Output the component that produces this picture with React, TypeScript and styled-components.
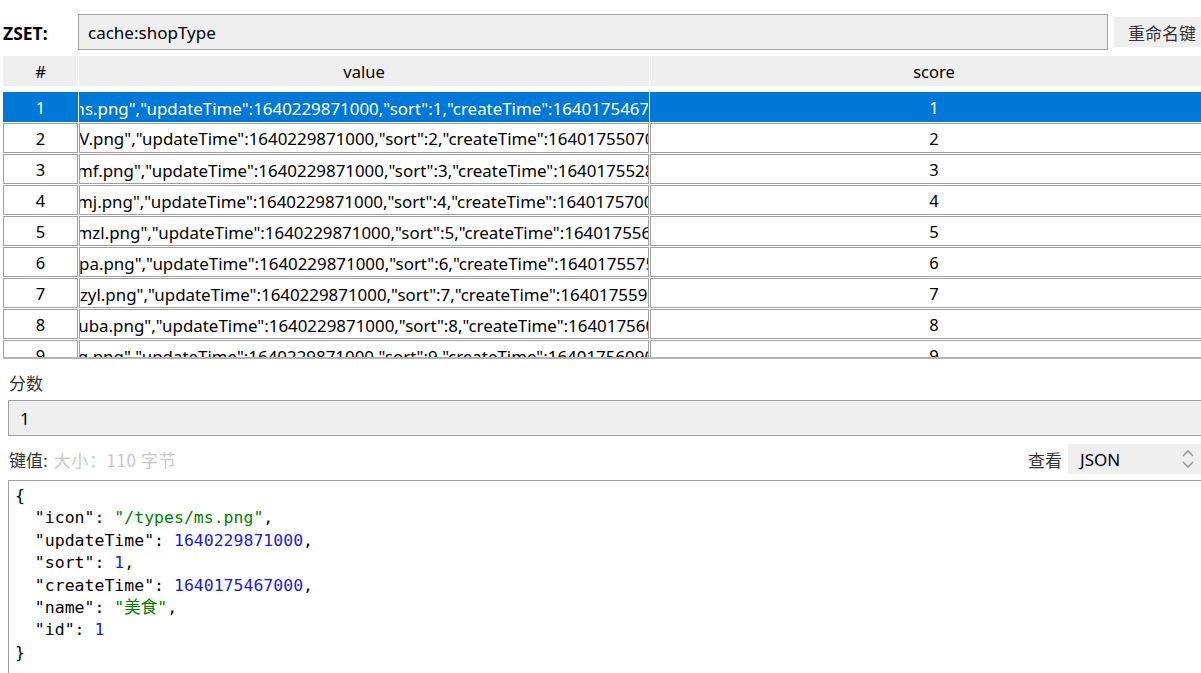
import React from "react";
import styled, { createGlobalStyle } from "styled-components";

const GlobalStyle = createGlobalStyle`
  html, body {
    margin: 0;
    padding: 0;
    background: #ffffff;
    overflow: hidden;
  }
  body {
    font-family: "Noto Sans", "Noto Sans CJK SC", sans-serif;
    color: #000;
  }
`;

const cjk = `"Noto Sans CJK SC", "Noto Sans", sans-serif`;

const Page = styled.div`
  width: 1230px;
  display: flex;
  flex-direction: column;
  padding-top: 14px;
`;

const KeyBar = styled.div`
  display: flex;
  align-items: center;
  padding-left: 3px;
`;

const TypeLabel = styled.div`
  width: 75px;
  font-weight: 700;
  font-size: 17.5px;
  padding-top: 2px;
  font-family: "Noto Sans", sans-serif;
`;

const KeyInput = styled.div`
  box-sizing: border-box;
  width: 1030px;
  height: 36px;
  border: 1px solid #a0a0a0;
  background: #efefef;
  display: flex;
  align-items: center;
  padding-left: 9px;
  font-size: 17px;
`;

const RenameButton = styled.button`
  margin-left: 6px;
  height: 30px;
  border: none;
  background: #efefef;
  padding: 0 14px;
  font-family: ${cjk};
  font-size: 17px;
  color: #333;
  white-space: nowrap;
`;

const TableView = styled.div`
  margin: 6px 0 0 3px;
  height: 301px;
  overflow: hidden;
  border-bottom: 2px solid #b4b4b4;
`;

const Grid = styled.div<{ $head?: boolean }>`
  display: grid;
  grid-template-columns: 75px 570px 568px;
  column-gap: 1px;
  margin-bottom: ${(p) => (p.$head ? "6px" : "1px")};
`;

const HeadCell = styled.div`
  height: 30px;
  background: #efefef;
  display: flex;
  align-items: center;
  justify-content: center;
  font-size: 16.5px;
`;

const Cell = styled.div<{ $selected?: boolean; $shift?: number }>`
  box-sizing: border-box;
  height: 30px;
  border: 1px solid ${(p) => (p.$selected ? "#0078d7" : "#a0a0a0")};
  background: ${(p) => (p.$selected ? "#0078d7" : "#fff")};
  color: ${(p) => (p.$selected ? "#fff" : "#000")};
  display: flex;
  align-items: center;
  justify-content: center;
  overflow: hidden;
  white-space: nowrap;
  padding-left: ${(p) => p.$shift ?? 0}px;
  font-size: 16.5px;
  font-family: "Noto Sans", "Noto Sans CJK SC", sans-serif;
`;

const ValueText = styled.span`
  font-size: 16.9px;
`;

const Lower = styled.div`
  width: 1195px;
  margin-left: 8px;
  display: flex;
  flex-direction: column;
`;

const FieldLabel = styled.div`
  margin: 12px 0 5px 1px;
  height: 24px;
  line-height: 24px;
  font-family: ${cjk};
  font-size: 17px;
  color: #333;
`;

const ScoreInput = styled.div`
  box-sizing: border-box;
  height: 36px;
  border: 1px solid #a0a0a0;
  background: #efefef;
  display: flex;
  align-items: center;
  padding-left: 11px;
  font-size: 17px;
`;

const ValueBar = styled.div`
  margin-top: 8px;
  height: 30px;
  display: flex;
  align-items: center;
`;

const ValueLabel = styled.span`
  margin-left: 1px;
  font-family: ${cjk};
  font-size: 17px;
  color: #333;
`;

const SizeInfo = styled.span`
  margin-left: 6px;
  font-family: ${cjk};
  font-size: 17px;
  letter-spacing: 0.6px;
  color: #c8c8c8;
  flex: 1;
`;

const ViewLabel = styled.span`
  font-family: ${cjk};
  font-size: 17px;
  color: #333;
  margin-right: 6px;
`;

const Select = styled.div`
  box-sizing: border-box;
  width: 135px;
  height: 30px;
  background: #efefef;
  display: flex;
  align-items: center;
  justify-content: space-between;
  padding: 0 8px 0 12px;
  font-size: 17px;
`;

const Editor = styled.pre`
  margin: 6px 0 0 0;
  height: 200px;
  box-sizing: border-box;
  border: 1px solid #a0a0a0;
  padding: 4px 0 0 6px;
  font-family: "DejaVu Sans Mono", "Noto Sans CJK SC", monospace;
  font-size: 16.5px;
  line-height: 22.4px;
  color: #000;
`;

const Str = styled.span`
  color: #008000;
`;

const Num = styled.span`
  color: #1a1ae6;
`;

// shift: how far the centred value text sits off the cell centre (x2)
const rows = [
  { icon: "ms", sort: 1, create: 1640175467000, name: "美食", id: 1, shift: 68 },
  { icon: "KTV", sort: 2, create: 1640175507000, name: "KTV", id: 2, shift: 50 },
  { icon: "lrmf", sort: 3, create: 1640175528000, name: "丽人·美发", id: 3, shift: 108 },
  { icon: "mjmj", sort: 4, create: 1640175700000, name: "美睫·美甲", id: 10, shift: 108 },
  { icon: "amzl", sort: 5, create: 1640175561000, name: "按摩·足疗", id: 5, shift: 116 },
  { icon: "spa", sort: 6, create: 1640175575000, name: "美容SPA", id: 6, shift: 104 },
  { icon: "qzyl", sort: 7, create: 1640175593000, name: "亲子游乐", id: 7, shift: 110 },
  { icon: "jiuba", sort: 8, create: 1640175604000, name: "酒吧", id: 8, shift: 84 },
  { icon: "hpg", sort: 9, create: 1640175609000, name: "轰趴馆", id: 9, shift: 68 },
];

const toValue = (r: (typeof rows)[number]) =>
  JSON.stringify({
    icon: `/types/${r.icon}.png`,
    updateTime: 1640229871000,
    sort: r.sort,
    createTime: r.create,
    name: r.name,
    id: r.id,
  });

const Chevrons = () => (
  <svg width="14" height="24" viewBox="0 0 14 24" fill="none" stroke="#9a9a9a" strokeWidth="1.6">
    <path d="M2 9 L7 4 L12 9" />
    <path d="M2 15 L7 20 L12 15" />
  </svg>
);

const App: React.FC = () => {
  return (
    <Page>
      <GlobalStyle />
      <KeyBar>
        <TypeLabel>ZSET:</TypeLabel>
        <KeyInput>cache:shopType</KeyInput>
        <RenameButton>重命名键</RenameButton>
      </KeyBar>

      <TableView>
        <Grid $head>
          <HeadCell>#</HeadCell>
          <HeadCell>value</HeadCell>
          <HeadCell>score</HeadCell>
        </Grid>
        {rows.map((r, i) => (
          <Grid key={r.icon}>
            <Cell $selected={i === 0}>{i + 1}</Cell>
            <Cell $selected={i === 0} $shift={r.shift}>
              <ValueText>{toValue(r)}</ValueText>
            </Cell>
            <Cell $selected={i === 0}>{r.sort}</Cell>
          </Grid>
        ))}
      </TableView>

      <Lower>
        <FieldLabel>分数</FieldLabel>
        <ScoreInput>1</ScoreInput>
        <ValueBar>
          <ValueLabel>键值:</ValueLabel>
          <SizeInfo>大小：110 字节</SizeInfo>
          <ViewLabel>查看</ViewLabel>
          <Select>
            <span>JSON</span>
            <Chevrons />
          </Select>
        </ValueBar>
        <Editor>
          {"{\n"}
          {'  "icon": '}<Str>"/types/ms.png"</Str>{",\n"}
          {'  "updateTime": '}<Num>1640229871000</Num>{",\n"}
          {'  "sort": '}<Num>1</Num>{",\n"}
          {'  "createTime": '}<Num>1640175467000</Num>{",\n"}
          {'  "name": '}<Str>"美食"</Str>{",\n"}
          {'  "id": '}<Num>1</Num>{"\n"}
          {"}"}
        </Editor>
      </Lower>
    </Page>
  );
};

export default App;
